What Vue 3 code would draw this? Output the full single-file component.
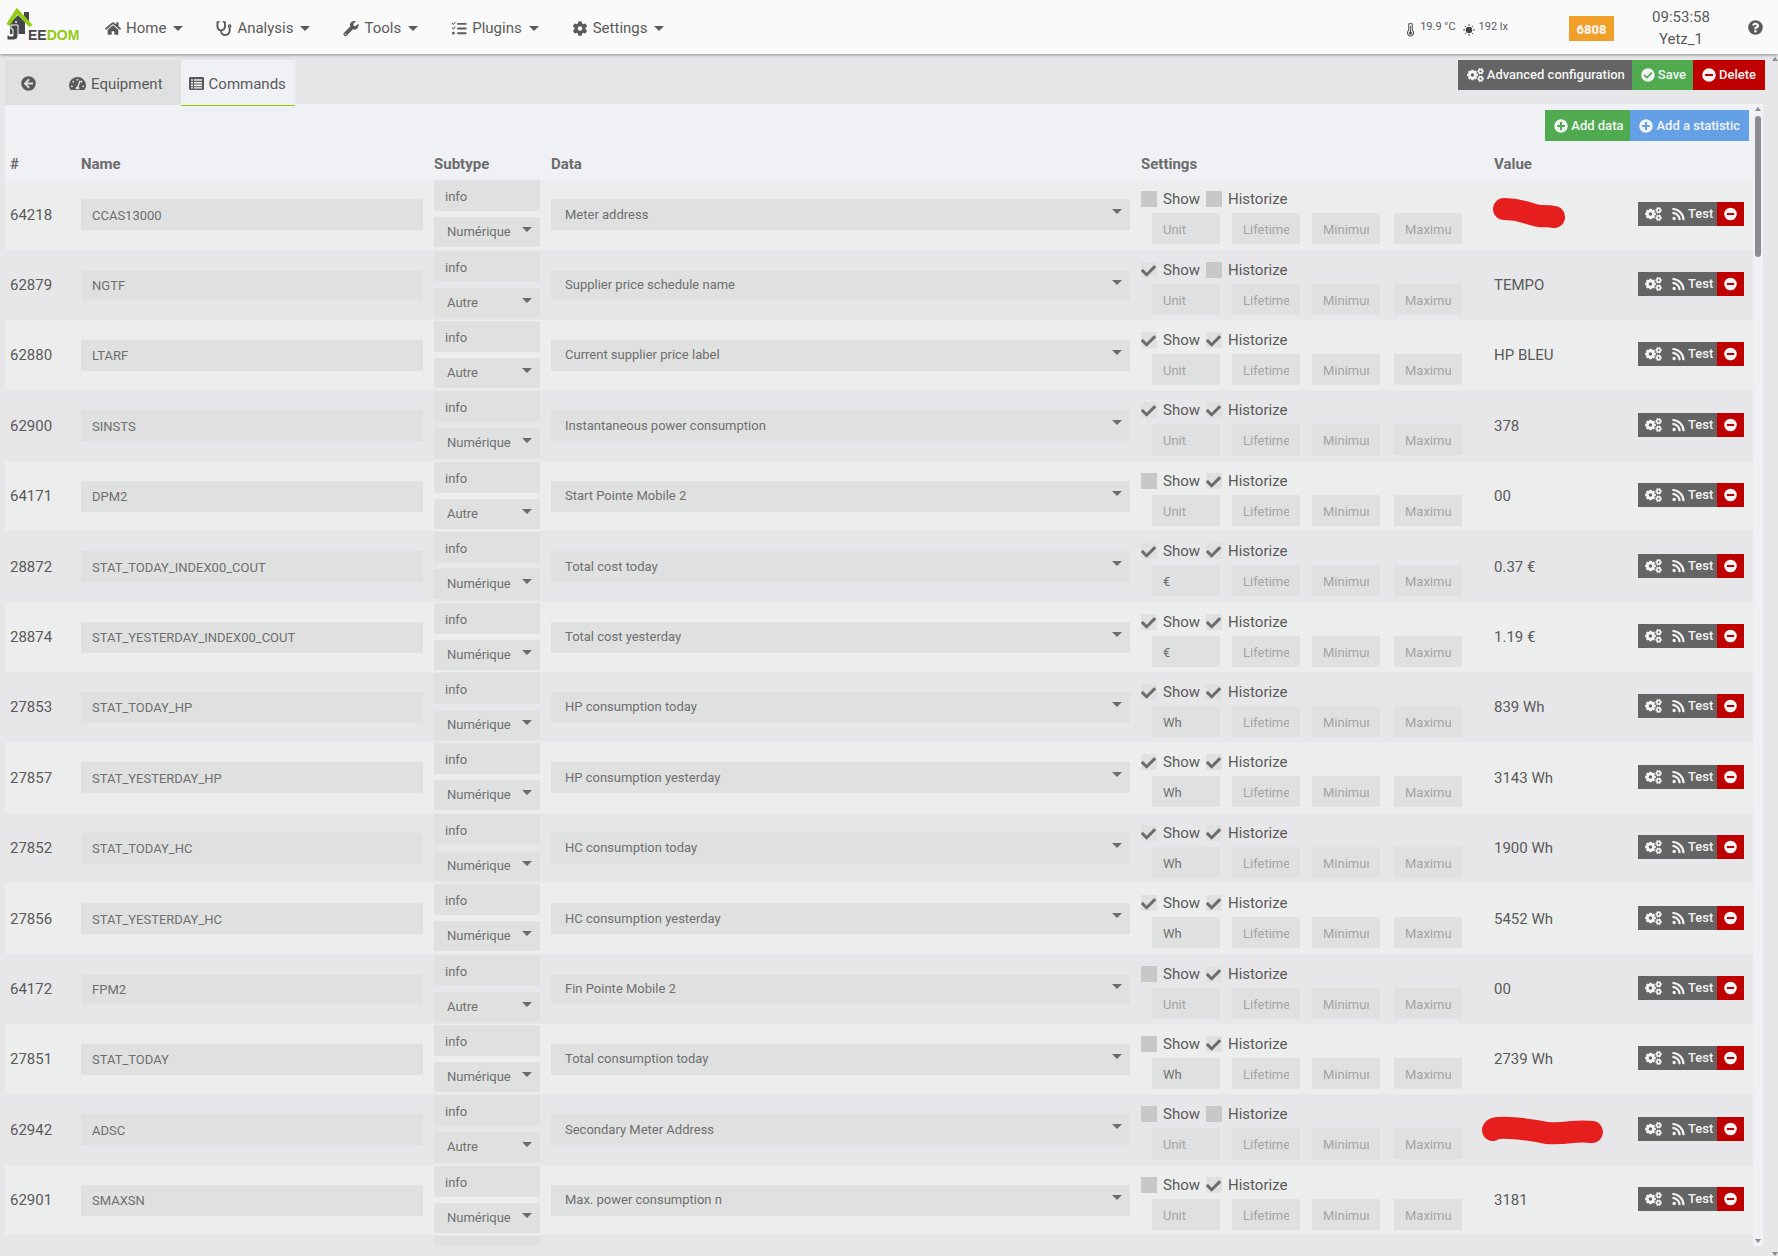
<script setup>
import { h } from 'vue'

const P = {
  home: ['0 0 576 512', 'M280 148 96 300v164a16 16 0 0 0 16 16h112a16 16 0 0 0 16-16v-96a16 16 0 0 1 16-16h64a16 16 0 0 1 16 16v96a16 16 0 0 0 16 16h112a16 16 0 0 0 16-16V300L296 148a12 12 0 0 0-16 0zM572 251l-84-69V44a12 12 0 0 0-12-12h-56a12 12 0 0 0-12 12v72l-89-74a48 48 0 0 0-61 0L4 251a12 12 0 0 0-1 17l25 31a12 12 0 0 0 17 2L280 107a12 12 0 0 1 16 0l235 194a12 12 0 0 0 17-2l25-31a12 12 0 0 0-1-17z'],
  steth: ['0 0 512 512', 'M447 112c-34 0-62 28-63 62 0 24 13 45 32 56v114c0 57-52 104-116 104s-114-44-116-100c73-15 136-79 136-154V38c0-9-6-17-16-19l-73-15c-9-2-18 4-20 13l-3 15c-2 9 4 18 12 19l36 8v130c0 53-43 99-96 99s-96-46-96-99V59l36-8c8-1 14-10 12-19l-3-15c-2-9-11-15-20-13L16 19C6 21 0 29 0 38v156c0 75 56 139 128 154 2 91 77 164 172 164s180-75 180-168V230a64 64 0 0 0-33-118zm1 80a16 16 0 1 1 0-32 16 16 0 0 1 0 32z'],
  wrench: ['0 0 512 512', 'M508 109a12 12 0 0 0-20-6l-74 75-68-12-12-68 75-74a12 12 0 0 0-6-20 144 144 0 0 0-174 186L19 400a64 64 0 0 0 93 93l210-210a144 144 0 0 0 186-174zM64 472a24 24 0 1 1 0-48 24 24 0 0 1 0 48z'],
  tasks: ['0 0 512 512', 'M139 61 72 129a12 12 0 0 1-17 0L16 91l-12-12 16-17 12-2 31 33 60-60 16 12zm0 152-67 68a12 12 0 0 1-17 0L4 231l18-18 41 35 60-60 16 12zM64 368a48 48 0 1 0 0 96 48 48 0 0 0 0-96zM496 384H208a16 16 0 0 0-16 16v32a16 16 0 0 0 16 16h288a16 16 0 0 0 16-16v-32a16 16 0 0 0-16-16zm0-320H208a16 16 0 0 0-16 16v32a16 16 0 0 0 16 16h288a16 16 0 0 0 16-16V80a16 16 0 0 0-16-16zm0 160H208a16 16 0 0 0-16 16v32a16 16 0 0 0 16 16h288a16 16 0 0 0 16-16v-32a16 16 0 0 0-16-16z'],
  cog: ['0 0 512 512', 'M487 316l-42-25a192 192 0 0 0 0-70l42-25a12 12 0 0 0 6-14 250 250 0 0 0-55-94 12 12 0 0 0-15-2l-42 24a186 186 0 0 0-61-35V26a12 12 0 0 0-9-12 251 251 0 0 0-110 0 12 12 0 0 0-9 12v49a194 194 0 0 0-61 35L89 86a12 12 0 0 0-15 2 249 249 0 0 0-55 94 12 12 0 0 0 6 14l42 25a192 192 0 0 0 0 70l-42 25a12 12 0 0 0-6 14 250 250 0 0 0 55 94 12 12 0 0 0 15 2l42-24a186 186 0 0 0 61 35v49a12 12 0 0 0 9 12 251 251 0 0 0 110 0 12 12 0 0 0 9-12v-49a194 194 0 0 0 61-35l42 24a12 12 0 0 0 15-2 249 249 0 0 0 55-94 12 12 0 0 0-6-14zM256 336a80 80 0 1 1 0-160 80 80 0 0 1 0 160z'],
  question: ['0 0 512 512', 'M504 256a248 248 0 1 1-496 0 248 248 0 0 1 496 0zM262 90c-54 0-89 23-116 63-4 6-3 12 2 16l35 27c5 4 13 3 17-2 18-23 30-36 57-36 20 0 46 13 46 33 0 15-13 23-33 34-23 13-54 29-54 70v6c0 7 6 12 12 12h56c7 0 12-5 12-12v-1c0-28 83-29 83-106 0-57-60-104-117-104zm-6 248a46 46 0 1 0 0 92 46 46 0 0 0 0-92z'],
  back: ['0 0 512 512', 'M256 504a248 248 0 1 1 0-496 248 248 0 0 1 0 496zm29-145-76-72h183c13 0 24-11 24-24v-16c0-13-11-24-24-24H209l76-72c10-9 10-25 0-35l-11-11a24 24 0 0 0-34 0L107 239a24 24 0 0 0 0 34l133 133a24 24 0 0 0 34 0l11-11c10-10 10-26 0-36z'],
  dash: ['0 0 576 512', 'M288 32C129 32 0 161 0 320c0 53 14 102 39 145 6 9 16 15 27 15h444c11 0 21-6 27-15a288 288 0 0 0-249-433zm0 64c15 0 27 10 31 24l-10 28c-5 7-12 12-21 12a32 32 0 1 1 0-64zM96 384a32 32 0 1 1 0-64 32 32 0 0 1 0 64zm48-160a32 32 0 1 1 0-64 32 32 0 0 1 0 64zm247-40-61 184a64 64 0 0 1 13 80H233a64 64 0 0 1 51-96l61-183a24 24 0 0 1 46 15zm15 31a32 32 0 1 1 8 4zM480 384a32 32 0 1 1 0-64 32 32 0 0 1 0 64z'],
  list: ['0 0 512 512', 'M464 32H48a48 48 0 0 0-48 48v352a48 48 0 0 0 48 48h416a48 48 0 0 0 48-48V80a48 48 0 0 0-48-48zM70 110h64v52H70zm100 0h272v52H170zM70 204h64v52H70zm100 0h272v52H170zM70 294h64v52H70zm100 0h272v52H170zM70 384h64v40H70zm100 0h272v40H170z'],
  check: ['0 0 512 512', 'M504 256a248 248 0 1 1-496 0 248 248 0 0 1 496 0zM227 387l184-184c7-6 7-16 0-22l-22-23c-7-6-17-6-23 0L216 308l-70-70c-6-6-16-6-23 0l-22 23c-7 6-7 16 0 22l104 104c6 7 16 7 22 0z'],
  minus: ['0 0 512 512', 'M256 8a248 248 0 1 0 0 496 248 248 0 0 0 0-496zM124 296c-7 0-12-5-12-12v-56c0-7 5-12 12-12h264c7 0 12 5 12 12v56c0 7-5 12-12 12z'],
  plus: ['0 0 512 512', 'M256 8a248 248 0 1 0 0 496 248 248 0 0 0 0-496zm144 276c0 7-5 12-12 12h-92v92c0 7-5 12-12 12h-56c-7 0-12-5-12-12v-92h-92c-7 0-12-5-12-12v-56c0-7 5-12 12-12h92v-92c0-7 5-12 12-12h56c7 0 12 5 12 12v92h92c7 0 12 5 12 12z'],
  rss: ['0 0 448 512', 'M128 416a64 64 0 1 1-128 0 64 64 0 0 1 128 0zm176 47A303 303 0 0 0 17 176 16 16 0 0 0 0 192v48c0 9 6 16 15 16a224 224 0 0 1 209 209c0 9 7 15 16 15h48a16 16 0 0 0 16-17zm144 0A447 447 0 0 0 17 32 16 16 0 0 0 0 48v48c0 9 7 16 15 16a368 368 0 0 1 353 353c0 8 7 15 16 15h48a16 16 0 0 0 16-17z'],
  tick: ['0 0 512 512', 'M174 439 7 273a26 26 0 0 1 0-37l37-36c10-10 26-10 36 0l112 112L432 72c10-10 26-10 36 0l37 37c10 10 10 26 0 36L210 439a26 26 0 0 1-36 0z'],
}

function gear(cx, cy, ro, ri, hole, n) {
  const pt = (r, a) => `${(cx + r * Math.cos(a)).toFixed(1)} ${(cy + r * Math.sin(a)).toFixed(1)}`
  const pts = []
  for (let i = 0; i < n; i++) {
    const a = (i * 2 * Math.PI) / n
    const s = Math.PI / n
    pts.push(pt(ri, a - s * 0.8), pt(ro, a - s * 0.55), pt(ro, a + s * 0.55), pt(ri, a + s * 0.8))
  }
  return `M${pts.join('L')}ZM${cx - hole} ${cy}a${hole} ${hole} 0 1 0 ${2 * hole} 0a${hole} ${hole} 0 1 0 ${-2 * hole} 0Z`
}
P.cogs = ['0 0 640 512', gear(206, 256, 206, 166, 66, 8) + gear(512, 116, 124, 94, 38, 6) + gear(512, 396, 124, 94, 38, 6)]

const Icon = (props) =>
  h('svg', { viewBox: P[props.name][0], fill: 'currentColor', 'fill-rule': 'evenodd', 'aria-hidden': 'true' }, [
    h('path', { d: P[props.name][1] }),
  ])
Icon.props = ['name']

const menu = [
  { icon: 'home', label: 'Home' },
  { icon: 'steth', label: 'Analysis' },
  { icon: 'wrench', label: 'Tools' },
  { icon: 'tasks', label: 'Plugins' },
  { icon: 'cog', label: 'Settings' },
]

const N = 'Numérique'
const A = 'Autre'
const rows = [
  [64218, 'CCAS13000', N, 'Meter address', false, false, '', '', 1],
  [62879, 'NGTF', A, 'Supplier price schedule name', true, false, '', 'TEMPO'],
  [62880, 'LTARF', A, 'Current supplier price label', true, true, '', 'HP BLEU'],
  [62900, 'SINSTS', N, 'Instantaneous power consumption', true, true, '', '378'],
  [64171, 'DPM2', A, 'Start Pointe Mobile 2', false, true, '', '00'],
  [28872, 'STAT_TODAY_INDEX00_COUT', N, 'Total cost today', true, true, '€', '0.37 €'],
  [28874, 'STAT_YESTERDAY_INDEX00_COUT', N, 'Total cost yesterday', true, true, '€', '1.19 €'],
  [27853, 'STAT_TODAY_HP', N, 'HP consumption today', true, true, 'Wh', '839 Wh'],
  [27857, 'STAT_YESTERDAY_HP', N, 'HP consumption yesterday', true, true, 'Wh', '3143 Wh'],
  [27852, 'STAT_TODAY_HC', N, 'HC consumption today', true, true, 'Wh', '1900 Wh'],
  [27856, 'STAT_YESTERDAY_HC', N, 'HC consumption yesterday', true, true, 'Wh', '5452 Wh'],
  [64172, 'FPM2', A, 'Fin Pointe Mobile 2', false, true, '', '00'],
  [27851, 'STAT_TODAY', N, 'Total consumption today', false, true, 'Wh', '2739 Wh'],
  [62942, 'ADSC', A, 'Secondary Meter Address', false, false, '', '', 2],
  [62901, 'SMAXSN', N, 'Max. power consumption n', false, true, '', '3181'],
].map(([id, name, sub, data, show, hist, unit, value, mask]) => ({ id, name, sub, data, show, hist, unit, value, mask }))
</script>

<template>
  <div class="page">
    <header class="navbar">
      <a href="#" class="logo" aria-label="Jeedom">
        <svg class="house" viewBox="0 0 28 34" aria-hidden="true">
          <path d="M18 5h5v11l-5-4z" fill="#46464b" />
          <path d="M4 16 12 8l7 7v12H4z" fill="#46464b" />
          <path d="M5 18h7v11a4 4 0 0 1-4 4H1v-5h2v1h4v-7H5z" fill="#46464b" stroke="#fafafa" stroke-width="1" />
          <circle cx="10" cy="15" r="1" fill="#fafafa" />
          <path d="M2 18 11 4l14 15" fill="none" stroke="#93cd12" stroke-width="4" />
        </svg>
        <span class="word">EE<b>DOM</b></span>
      </a>
      <nav class="menu">
        <a v-for="m in menu" :key="m.label" href="#"><Icon :name="m.icon" class="ic" />{{ m.label }}<i class="caret"></i></a>
      </nav>
      <div class="sensors">
        <svg class="thermo" viewBox="0 0 10 16" fill="none" stroke="#555" aria-hidden="true">
          <path d="M3 9V3a2 2 0 0 1 4 0v6a3.4 3.4 0 1 1-4 0z" stroke-width="1.2" />
          <path d="M5 4v8" stroke-width="1" /><circle cx="5" cy="12" r="1.4" fill="#555" />
        </svg>
        <span>19.9 °C</span>
        <svg class="sun" viewBox="0 0 12 12" stroke="#555" aria-hidden="true">
          <circle cx="6" cy="6" r="3.2" fill="#444" stroke="none" />
          <path d="M6 0v2M6 10v2M0 6h2M10 6h2M1.8 1.8l1.3 1.3M8.9 8.9l1.3 1.3M10.2 1.8 8.9 3.1M3.1 8.9l-1.3 1.3" />
        </svg>
        <span>192 lx</span>
      </div>
      <span class="badge">6808</span>
      <div class="clock"><span>09:53:58</span><span>Yetz_1</span></div>
      <a href="#" class="help" aria-label="Help"><Icon name="question" class="ic" /></a>
    </header>

    <main class="content">
      <div class="topline">
        <nav class="tabs">
          <a href="#" class="tab return" aria-label="Back"><Icon name="back" class="ic" /></a>
          <a href="#" class="tab equipment"><Icon name="dash" class="ic wide" />Equipment</a>
          <a href="#" class="tab active"><Icon name="list" class="ic" />Commands</a>
        </nav>
        <div class="group">
          <button class="btn dark"><Icon name="cogs" class="ic wide" />Advanced configuration</button>
          <button class="btn green"><Icon name="check" class="ic" />Save</button>
          <button class="btn red"><Icon name="minus" class="ic" />Delete</button>
        </div>
      </div>

      <section class="panel">
        <div class="scroll">
          <div class="group add">
            <button class="btn green"><Icon name="plus" class="ic" />Add data</button>
            <button class="btn blue"><Icon name="plus" class="ic" />Add a statistic</button>
          </div>
          <table>
            <colgroup>
              <col class="c-id" /><col class="c-name" /><col class="c-sub" /><col />
              <col class="c-set" /><col class="c-val" /><col class="c-act" />
            </colgroup>
            <thead>
              <tr><th>#</th><th>Name</th><th>Subtype</th><th>Data</th><th>Settings</th><th>Value</th><th></th></tr>
            </thead>
            <tbody>
              <tr v-for="r in rows" :key="r.id">
                <td>{{ r.id }}</td>
                <td><input class="field" :value="r.name" aria-label="Name" /></td>
                <td class="sub">
                  <input class="field" value="info" readonly aria-label="Type" />
                  <div class="pick"><select class="field" aria-label="Subtype"><option>{{ r.sub }}</option></select></div>
                </td>
                <td><div class="pick"><select class="field" aria-label="Data"><option>{{ r.data }}</option></select></div></td>
                <td class="set">
                  <div class="checks">
                    <label><span class="box"><input type="checkbox" :checked="r.show" /><Icon v-if="r.show" name="tick" class="tick" /></span>Show</label>
                    <label><span class="box"><input type="checkbox" :checked="r.hist" /><Icon v-if="r.hist" name="tick" class="tick" /></span>Historize</label>
                  </div>
                  <div class="limits">
                    <input class="field" placeholder="Unit" :value="r.unit" aria-label="Unit" />
                    <input class="field" placeholder="Lifetime" aria-label="Lifetime" />
                    <input class="field" placeholder="Minimum" aria-label="Minimum" />
                    <input class="field last" placeholder="Maximum" aria-label="Maximum" />
                  </div>
                </td>
                <td>
                  <svg v-if="r.mask === 1" class="mask" viewBox="0 0 124 36" aria-hidden="true">
                    <path d="M22 12q12 0 24 4t14 3q8 0 12 1" />
                  </svg>
                  <svg v-else-if="r.mask === 2" class="mask" viewBox="0 0 124 36" aria-hidden="true">
                    <path d="M11 18q2-3 16-2 20 1 38 5 10 1 25-1 12-1 20 0" />
                  </svg>
                  <template v-else>{{ r.value }}</template>
                </td>
                <td class="act">
                  <div class="group row">
                    <button class="mini dark" aria-label="Configure"><Icon name="cogs" class="ic wide" /></button>
                    <button class="mini dark test"><Icon name="rss" class="ic" />Test</button>
                    <button class="mini red" aria-label="Remove"><Icon name="minus" class="ic" /></button>
                  </div>
                </td>
              </tr>
              <tr>
                <td></td><td></td>
                <td class="sub"><input class="field" readonly aria-label="Type" /></td>
                <td></td><td></td><td></td><td></td>
              </tr>
            </tbody>
          </table>
        </div>
        <div class="bar"><i class="up"></i><i class="thumb"></i><i class="down"></i></div>
      </section>
      <div class="pagebar"><i class="up"></i><i class="down"></i></div>
    </main>
  </div>
</template>

<style>
body {
  margin: 0;
  background: #e7e7e9;
}
</style>

<style scoped>
.page {
  height: 100vh;
  display: flex;
  flex-direction: column;
  overflow: hidden;
  background: #e7e7e9;
  color: #5a5a5a;
  font: 15px/20px Roboto, sans-serif;
}
.page * {
  box-sizing: border-box;
}
a {
  color: inherit;
  text-decoration: none;
}
.ic {
  width: 15px;
  height: 15px;
  flex: none;
}
.ic.wide {
  width: 17px;
}

.navbar {
  position: relative;
  z-index: 1;
  flex: none;
  height: 54px;
  display: flex;
  align-items: center;
  background: #fafafa;
  box-shadow: 0 1px 3px rgba(0, 0, 0, 0.4);
}
.logo {
  display: flex;
  align-items: flex-end;
  width: 105px;
  padding: 0 0 6px 6px;
}
.house {
  width: 28px;
  height: 34px;
  margin-right: -6px;
}
.word {
  font: bold 14px/12px "Liberation Sans", sans-serif;
  color: #46464b;
}
.word b {
  color: #93cd12;
}
.menu {
  flex: 1;
  display: flex;
  gap: 33px;
  padding-top: 2px;
}
.menu a {
  display: flex;
  align-items: center;
  gap: 5px;
}
.menu .ic {
  width: 16px;
}
.caret {
  margin-left: 2px;
  border: solid transparent;
  border-width: 5px 5px 0;
  border-top-color: currentColor;
}
.sensors {
  display: flex;
  align-items: center;
  gap: 5px;
  font-size: 11px;
  margin-right: 61px;
}
.thermo {
  width: 9px;
  height: 15px;
  margin-top: 5px;
}
.sun {
  width: 12px;
  height: 12px;
  margin: 5px -1px 0 2px;
}
.badge {
  width: 45px;
  height: 25px;
  background: #f0a029;
  color: #f5f1e8;
  font: 900 13px/27px Roboto, sans-serif;
  text-align: center;
  margin-top: 3px;
}
.clock {
  width: 134px;
  display: flex;
  flex-direction: column;
  text-align: center;
  line-height: 22px;
  padding-top: 1px;
}
.help {
  display: flex;
  width: 30px;
}

.content {
  position: relative;
  flex: 1;
  min-height: 0;
  display: flex;
  flex-direction: column;
  padding: 6px 15px 10px 5px;
}
.topline {
  display: flex;
  justify-content: space-between;
  align-items: flex-start;
  height: 44px;
  flex: none;
}
.tabs {
  display: flex;
  position: relative;
  z-index: 1;
}
.tab {
  display: flex;
  align-items: center;
  gap: 5px;
  height: 45px;
  padding: 2px 9px 0 8px;
  background: #dfe1e0;
}
.tab.return {
  width: 48px;
  padding-left: 16px;
}
.tab.equipment {
  padding: 2px 18px 0 16px;
}
.tab.active {
  height: 46px;
  background: #eff1f4;
  border-bottom: 1px solid #94ca02;
}
.group {
  display: flex;
}
.content > .topline > .group {
  margin-right: -2px;
}
button {
  display: flex;
  align-items: center;
  border: 0;
  color: #f4f4f4;
  font: 500 13px/20px Roboto, sans-serif;
  white-space: nowrap;
}
.btn {
  height: 30px;
  gap: 3px;
  padding: 0 7px 0 9px;
}
.btn:last-child {
  padding-right: 9px;
}
.btn .ic {
  height: 14px;
  width: 14px;
}
.btn .ic.wide {
  width: 17px;
}
.dark {
  background: #646464;
}
.green {
  background: #50aa50;
}
.red {
  background: #be0000;
}
.blue {
  background: #64a0e6;
}

.panel {
  flex: 1;
  min-height: 0;
  display: flex;
  background: #eff1f4;
}
.scroll {
  flex: 1;
  overflow: hidden;
}
.add {
  justify-content: flex-end;
  padding: 6px 4px 0 0;
}
.add .btn {
  height: 31px;
}
table {
  width: 100%;
  table-layout: fixed;
  border-collapse: collapse;
}
.c-id {
  width: 71px;
}
.c-name,
.c-set {
  width: 353px;
}
.c-sub {
  width: 117px;
}
.c-val {
  width: 144px;
}
.c-act {
  width: 120px;
}
th {
  height: 38px;
  padding: 7px 5px 0;
  text-align: left;
  font-weight: 700;
  color: #6c6c6c;
}
td {
  height: 70px;
  padding: 0 6px 0 5px;
}
tbody tr {
  background: #e7e7e9;
}
tbody tr:nth-child(odd) {
  background: #eceeed;
}
tbody tr:nth-child(5n + 1) td,
tbody tr:nth-child(5n + 4) td {
  height: 71px;
}
.field {
  display: block;
  width: 100%;
  height: 31px;
  margin: 0;
  padding: 1px 11px 0;
  border: 0;
  border-radius: 0;
  background: #dfe1e0;
  color: #6f6f6f;
  font: 13px/20px Roboto, sans-serif;
  appearance: none;
}
.field::placeholder {
  color: #a4a4a4;
  opacity: 1;
}
select.field {
  padding: 0 14px;
}
.pick {
  position: relative;
}
.pick::after {
  content: "";
  position: absolute;
  top: 10px;
  right: 8px;
  border: solid transparent;
  border-width: 5px 5px 0;
  border-top-color: #6c6c6c;
}
td.sub {
  vertical-align: top;
  padding-top: 1px;
}
.sub .pick {
  margin-top: 6px;
}
.sub select.field {
  height: 30px;
  padding: 0 13px;
}
td.set {
  vertical-align: top;
}
td.act {
  padding-bottom: 2px;
}
.checks {
  display: flex;
  gap: 6px;
  height: 34px;
  padding-top: 10px;
}
.checks label {
  display: flex;
  gap: 6px;
}
.box {
  position: relative;
  width: 16px;
  height: 16px;
  margin-top: 2px;
}
.box input {
  display: block;
  appearance: none;
  width: 16px;
  height: 16px;
  margin: 0;
  background: #c8c8c8;
}
.box input:checked {
  background: #dfe1e0;
}
.tick {
  position: absolute;
  left: 0;
  top: 1px;
  width: 15px;
  height: 16px;
  color: #6c6c6c;
}
.limits {
  display: flex;
  gap: 12px;
  padding-left: 11px;
}
.limits .field {
  width: 68px;
}
.limits .last {
  margin-left: 2px;
}
.mask {
  display: block;
  width: 124px;
  height: 36px;
  margin-left: -12px;
}
.mask path {
  fill: none;
  stroke: #e61e1e;
  stroke-width: 22;
  stroke-linecap: round;
}
.mini {
  height: 24px;
  gap: 3px;
  padding: 0 7px;
}
.mini.test {
  padding: 0 4px 0 3px;
}
.mini .ic {
  width: 13px;
  height: 14px;
}
.mini .ic.wide {
  width: 17px;
}
.bar {
  display: flex;
  flex-direction: column;
  align-items: center;
  width: 10px;
  flex: none;
}
.up,
.down {
  border: solid transparent;
}
.up {
  border-width: 0 3px 4px;
  border-bottom-color: #8b8b91;
}
.down {
  border-width: 4px 3px 0;
  border-top-color: #8b8b91;
}
.bar .up {
  margin-top: 3px;
}
.bar .thumb {
  width: 6px;
  height: 141px;
  margin-top: 5px;
  border-radius: 3px;
  background: #8b8b91;
}
.bar .down {
  margin: auto 0 3px;
}
.pagebar {
  position: absolute;
  top: 3px;
  right: 0;
  bottom: 0;
  display: flex;
  flex-direction: column;
  justify-content: space-between;
}
</style>
